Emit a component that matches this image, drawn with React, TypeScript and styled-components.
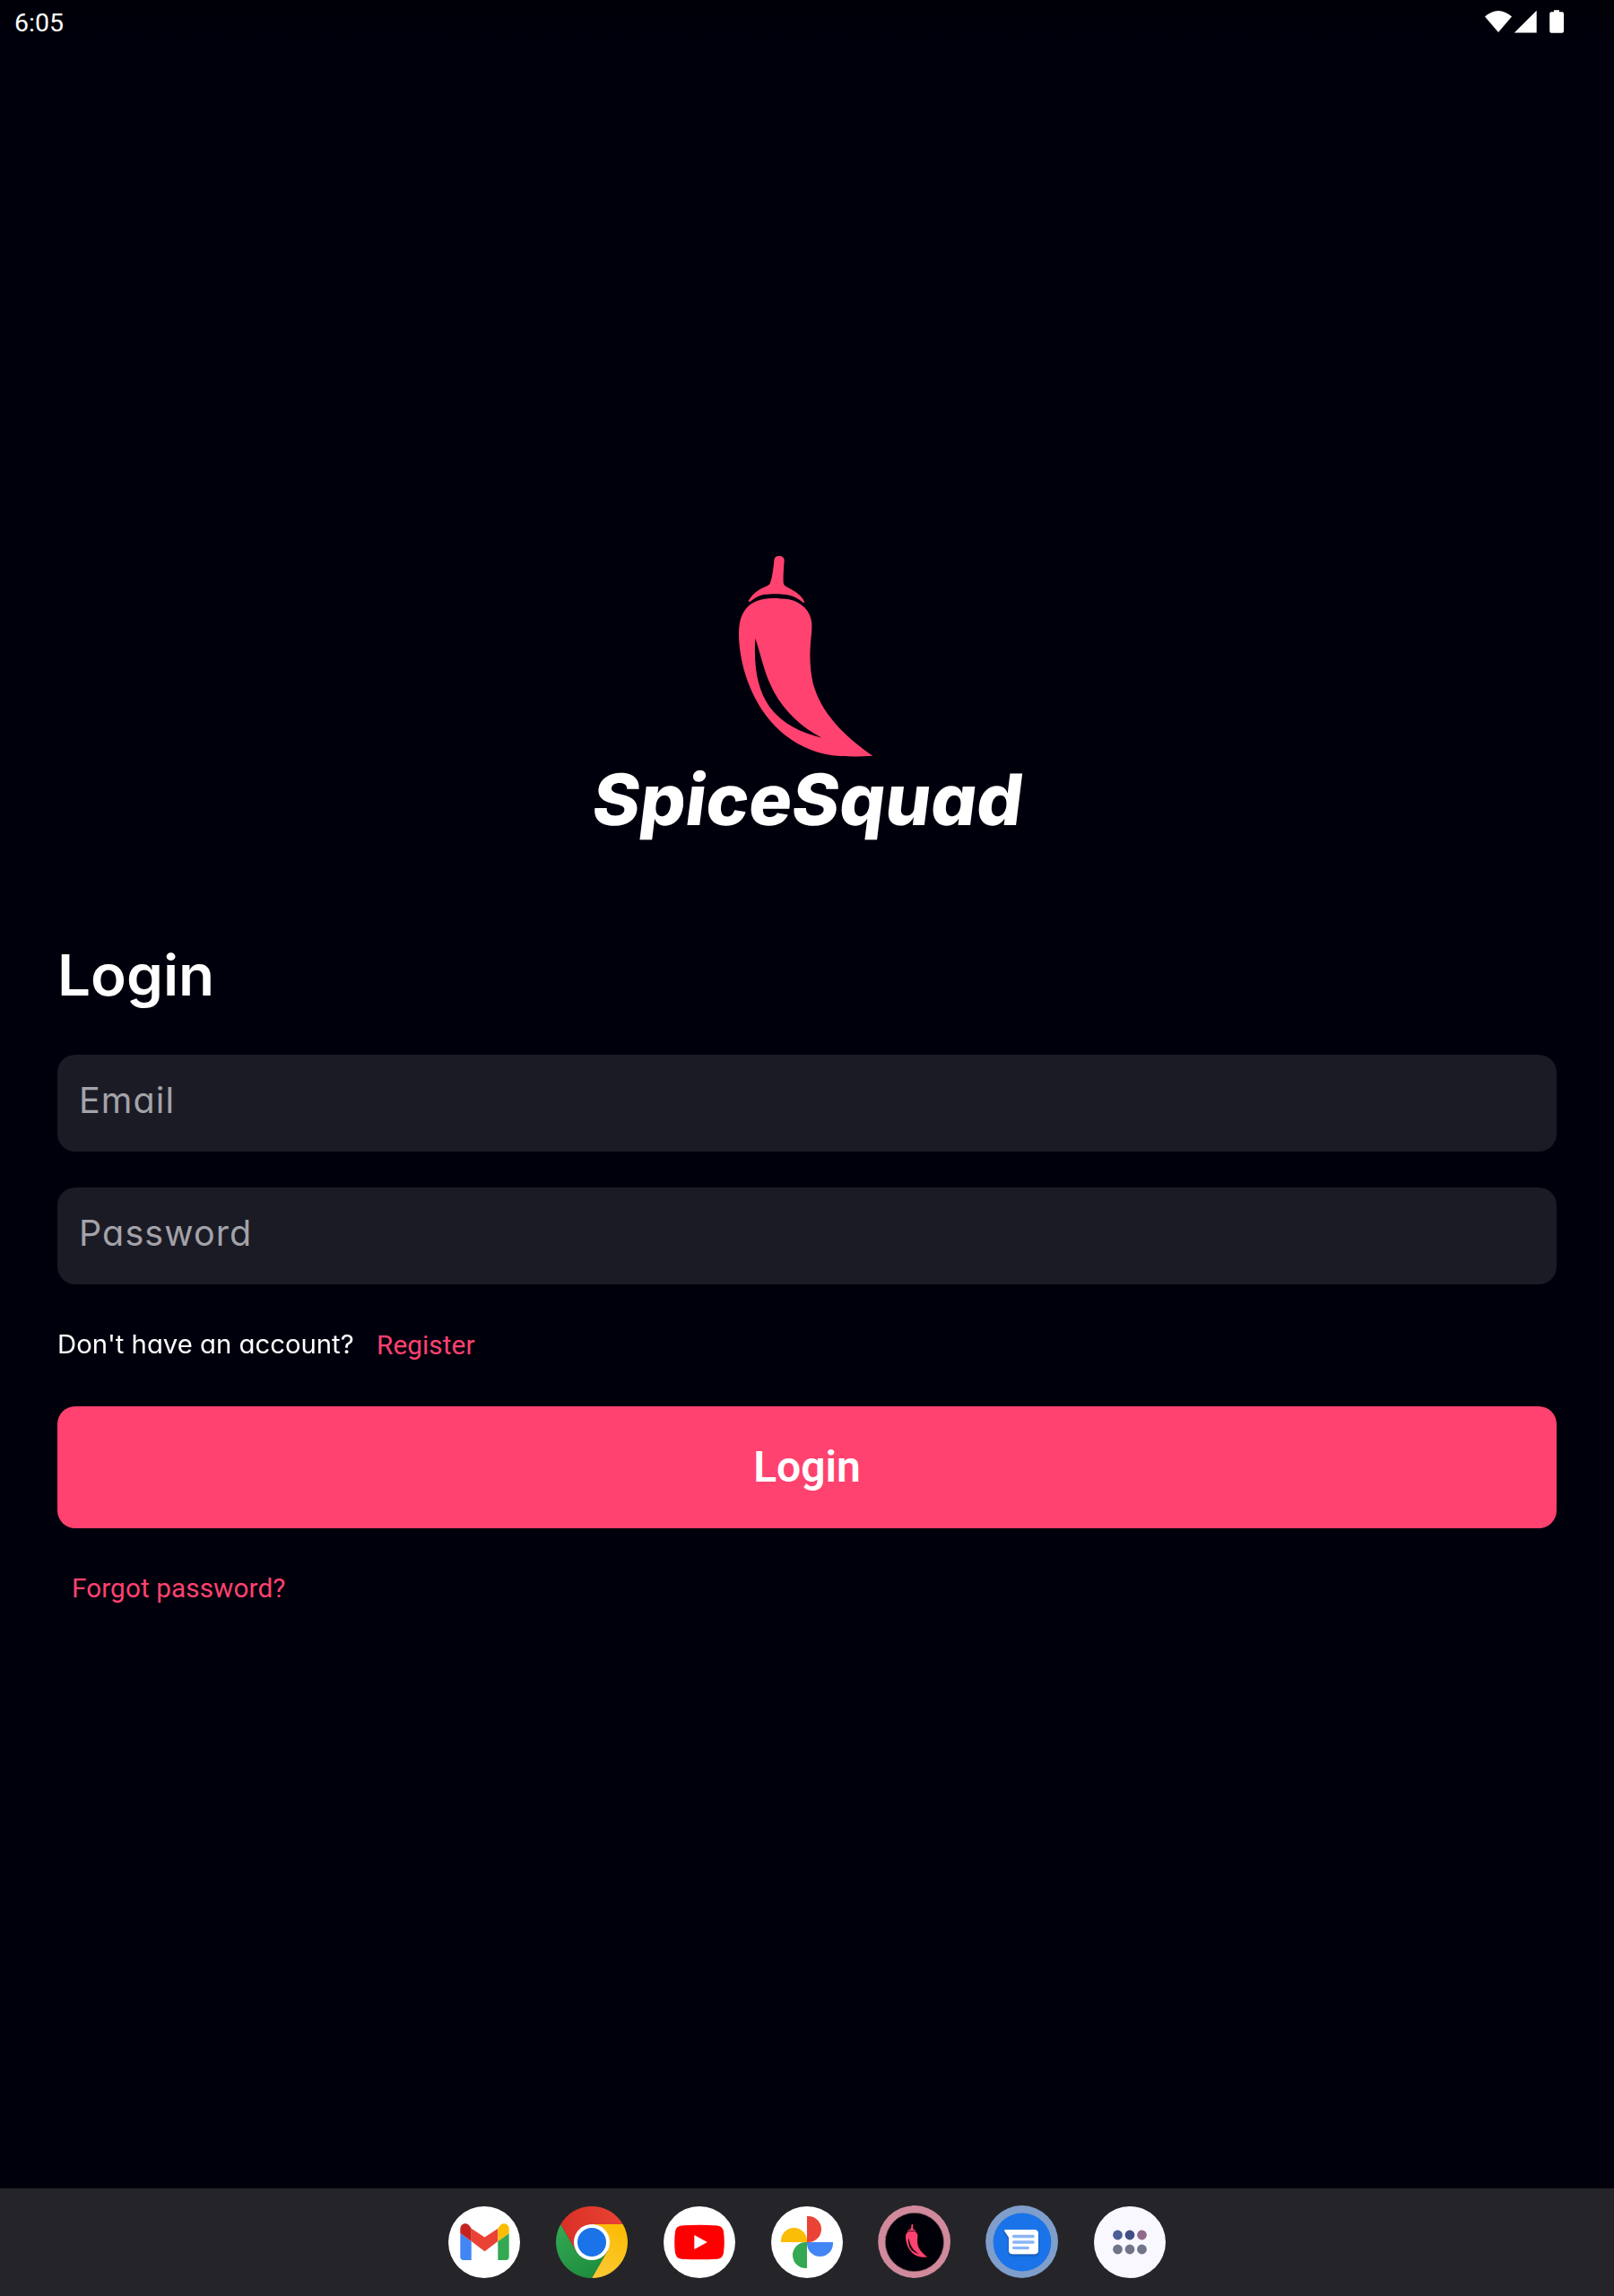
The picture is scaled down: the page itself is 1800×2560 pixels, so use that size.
import React from 'react';
import styled, { createGlobalStyle } from 'styled-components';

const PINK = '#ff426f';
const ROUNDED = "Inter, 'Open Sans', sans-serif";
const ROBOTO = "Roboto, 'Noto Sans', sans-serif";

const GlobalStyle = createGlobalStyle`
  * { box-sizing: border-box; }
  body { margin: 0; background: #00000d; }
`;

const Screen = styled.div`
  width: 1800px;
  height: 2560px;
  display: flex;
  flex-direction: column;
  background: #00000d;
  color: #fff;
  overflow: hidden;
`;

const StatusBar = styled.header`
  height: 52px;
  padding: 0 56px 0 16px;
  display: flex;
  align-items: flex-start;
  justify-content: space-between;
  background: linear-gradient(#000007, #00000d);
`;

const Clock = styled.time`
  font: 400 28.5px/52px ${ROBOTO};
`;

const StatusIcons = styled.svg`
  display: block;
  width: 92px;
  height: 28px;
  margin-top: 10px;
`;

const Content = styled.main`
  flex: 1;
  display: flex;
  flex-direction: column;
  padding: 548px 64px 0;
`;

const Brand = styled.div`
  display: flex;
  flex-direction: column;
  align-items: center;
  height: 440px;
`;

const Pepper = styled.svg<{ $w: number; $h: number }>`
  display: block;
  flex: none;
  width: ${p => p.$w}px;
  height: ${p => p.$h}px;
`;

const BrandName = styled.div`
  font: 800 79px/90px ${ROUNDED};
  font-feature-settings: 'cv11' 1;
  margin: -14px 0 0 2px;
  transform: skewX(-7deg) scaleX(1.014);
  white-space: nowrap;
`;

const Heading = styled.h1`
  margin: 0;
  height: 136px;
  font: 600 63px/95px ${ROUNDED};
  font-feature-settings: 'cv11' 1;
  transform: scaleX(1.04);
  transform-origin: left;
`;

const Field = styled.input`
  display: block;
  width: 100%;
  height: 108px;
  margin: 0 0 40px;
  padding: 0 24px 6px;
  border: 0;
  outline: 0;
  border-radius: 20px;
  background: #1b1b26;
  color: #fff;
  font: 400 39.5px/60px ${ROUNDED};
  font-feature-settings: 'cv11' 1;
  letter-spacing: 1.1px;
  &::placeholder { color: #a3a3a8; opacity: 1; }
`;

const RegisterRow = styled.div`
  display: flex;
  align-items: center;
  height: 56px;
  margin-bottom: 40px;
`;

const Prompt = styled.span`
  width: 356px;
  padding-bottom: 2px;
  font: 400 28px/52px ${ROUNDED};
  font-feature-settings: 'cv11' 1;
  transform: scaleX(1.046);
  transform-origin: left;
  white-space: nowrap;
`;

const Link = styled.a<{ $indent?: boolean }>`
  font: 400 29.7px/56px ${ROBOTO};
  letter-spacing: 0.1px;
  color: ${PINK};
  padding-left: ${p => (p.$indent ? 16 : 0)}px;
  margin-top: -1px;
  white-space: nowrap;
`;

const LoginButton = styled.button`
  height: 136px;
  margin: 0 0 40px;
  padding: 0;
  border: 0;
  border-radius: 20px;
  background: ${PINK};
  color: #fff;
  font: 600 48px/60px ${ROBOTO};
`;

const Dock = styled.nav`
  flex: none;
  height: 120px;
  display: flex;
  align-items: center;
  justify-content: center;
  gap: 38px;
  background: #252529;
`;

const AppIcon = styled.svg`
  display: block;
  width: 82px;
  height: 82px;
`;

const STEM =
  'M190 75C191 64 197 60 207 60C218 60 225 66 224 76C222 100 220 125 221 148C222 158 228 161 236 165C262 178 284 195 291 212C291 217 288 217 284 213C268 200 250 190 220 188C200 186 180 186 155 189C138 192 122 203 112 211C106 215 102 213 105 208C115 192 130 176 150 167C165 161 174 158 177 150C184 130 187 105 190 75Z';
const POD =
  'M185 201C205 201 222 203 240 205C285 215 312 245 316 285C317 310 314 325 312 350C308 400 311 445 320 485C345 580 420 660 520 728C480 731 430 732 385 727C240 705 140 600 95 460C75 395 68 330 74 290C82 240 110 202 185 201ZM127 335C145 385 155 450 190 515C225 580 285 635 350 668C280 652 215 620 175 565C130 500 122 420 127 335Z';

const PepperShape = () => (
  <g fill={PINK}>
    <path d={STEM} />
    <path d={POD} fillRule="evenodd" />
  </g>
);

const Gmail = () => (
  <AppIcon viewBox="-41 -41 82 82">
    <circle r="40" fill="#fff" />
    <path d="M-26.7-10L-14.3-1V20H-23Q-26.7 20-26.7 16Z" fill="#4285f4" />
    <path d="M27.7-10L15.3-1V20H24Q27.7 20 27.7 16Z" fill="#34a853" />
    <path d="M-14.3-15.3L.5-5.5L15.3-15.3V-1L.5 10.3L-14.3-1Z" fill="#ea4335" />
    <path d="M-14.3-15.3V-1L-26.7-10V-14.5C-26.7-20.5-20.5-22.5-16.8-18.7Z" fill="#c5221f" />
    <path d="M15.3-15.3V-1L27.7-10V-14.5C27.7-20.5 21.5-22.5 17.8-18.7Z" fill="#fbbc04" />
  </AppIcon>
);

const Chrome = () => (
  <AppIcon viewBox="-41 -41 82 82">
    <defs>
      <linearGradient id="cr"><stop stopColor="#d93025" /><stop offset="1" stopColor="#ea4335" /></linearGradient>
      <linearGradient id="cg" x1=".6" y1="1" x2=".1" y2="0"><stop stopColor="#1e8e3e" /><stop offset="1" stopColor="#34a853" /></linearGradient>
      <linearGradient id="cy" x1=".3" y1="1" x2=".6" y2="0"><stop stopColor="#fcc934" /><stop offset="1" stopColor="#fbbc04" /></linearGradient>
    </defs>
    <path d="M0-20H34.64A40 40 0 0 1 0 40L17.32 10Z" fill="url(#cy)" />
    <path d="M17.32 10L0 40A40 40 0 0 1-34.64-20L-17.32 10Z" fill="url(#cg)" />
    <path d="M-34.64-20A40 40 0 0 1 34.64-20H0L-17.32 10Z" fill="url(#cr)" />
    <circle r="20" fill="#fff" />
    <circle r="16" fill="#1a73e8" />
  </AppIcon>
);

const YouTube = () => (
  <AppIcon viewBox="-41 -41 82 82">
    <circle r="40" fill="#fff" />
    <path d="M-20-18.6Q0-19.8 20-18.6Q26.3-18 27-11.5Q28.6 0 27 11.5Q26.3 18 20 18.7Q0 20 -20 18.7Q-26.3 18-27 11.5Q-28.6 0-27-11.5Q-26.3-18-20-18.6Z" fill="#f00" />
    <path d="M-5.7-8L8.8 0L-5.7 8Z" fill="#fff" />
  </AppIcon>
);

const Photos = () => (
  <AppIcon viewBox="-41 -41 82 82">
    <circle r="40" fill="#fff" />
    <path d="M0 0H-29V-1.5A14.5 14.5 0 0 1 0-1.5Z" fill="#fbbc04" />
    <path d="M0 0V-29H1.5A14.5 14.5 0 0 1 1.5 0Z" fill="#ea4335" />
    <path d="M0 0H29V1.5A14.5 14.5 0 0 1 0 1.5Z" fill="#4285f4" />
    <path d="M0 0V29H-1.5A14.5 14.5 0 0 1-1.5 0Z" fill="#34a853" />
  </AppIcon>
);

const Spice = () => (
  <AppIcon viewBox="-41 -41 82 82">
    <circle cx="-.4" cy="-.5" r="40.4" fill="#d08a9c" />
    <circle cx="-.1" r="32.7" fill="#000008" stroke="#9b6270" strokeWidth=".7" />
    <g transform="translate(-13.9 -23.3) scale(.0548)">
      <PepperShape />
    </g>
  </AppIcon>
);

const Messages = () => (
  <AppIcon viewBox="-41 -41 82 82">
    <defs>
      <filter id="ms" x="-20%" y="-20%" width="140%" height="160%">
        <feDropShadow dx="0" dy="1.6" stdDeviation="1.3" floodColor="#0a3478" floodOpacity=".55" />
      </filter>
    </defs>
    <circle cx="-.4" cy="-.5" r="40.4" fill="#7f9ecb" />
    <circle r="32.4" fill="#1a73e8" />
    <path d="M-19-14H13.5Q18-14 18-9.5V9Q18 13.3 13.5 13.3H-10.5Q-15 13.3-15 9V-5.5L-19.8-12.5Q-20.4-14-19-14Z" fill="#fff" filter="url(#ms)" />
    <path d="M-9.4-6.5H12.2M-9.4 0H12.2M-9.4 6.3H6.4" stroke="#8ab4f8" strokeWidth="3.3" strokeLinecap="round" />
  </AppIcon>
);

const AllApps = () => (
  <AppIcon viewBox="-41 -41 82 82">
    <circle r="40" fill="#faf8ff" />
    {['#4a5e98', '#3f5086', '#8f6a8c'].map((c, i) => (
      <g key={c}>
        <circle cx={(i - 1) * 13.5} cy="-8" r="5.4" fill={c} />
        <circle cx={(i - 1) * 13.5} cy="8" r="5.4" fill="#70758a" />
      </g>
    ))}
  </AppIcon>
);

export default function App() {
  return (
    <Screen>
      <GlobalStyle />
      <StatusBar>
        <Clock>6:05</Clock>
        <StatusIcons viewBox="0 0 92 28" fill="#fff">
          <path d="M4 8.5Q18.8-4.7 34 8.5L19 26Z" />
          <path d="M61.7 1.8V26.6H36.8Z" />
          <path d="M81 1.2H87V3.2H90Q92 3.2 92 5.2V24.7Q92 26.7 90 26.7H78.2Q76.2 26.7 76.2 24.7V5.2Q76.2 3.2 78.2 3.2H81Z" />
        </StatusIcons>
      </StatusBar>
      <Content>
        <Brand>
          <Pepper $w={200} $h={260} viewBox="0 0 600 780">
            <PepperShape />
          </Pepper>
          <BrandName>SpiceSquad</BrandName>
        </Brand>
        <Heading>Login</Heading>
        <Field placeholder="Email" />
        <Field placeholder="Password" />
        <RegisterRow>
          <Prompt>Don't have an account?</Prompt>
          <Link>Register</Link>
        </RegisterRow>
        <LoginButton>Login</LoginButton>
        <Link $indent>Forgot password?</Link>
      </Content>
      <Dock>
        <Gmail />
        <Chrome />
        <YouTube />
        <Photos />
        <Spice />
        <Messages />
        <AllApps />
      </Dock>
    </Screen>
  );
}
